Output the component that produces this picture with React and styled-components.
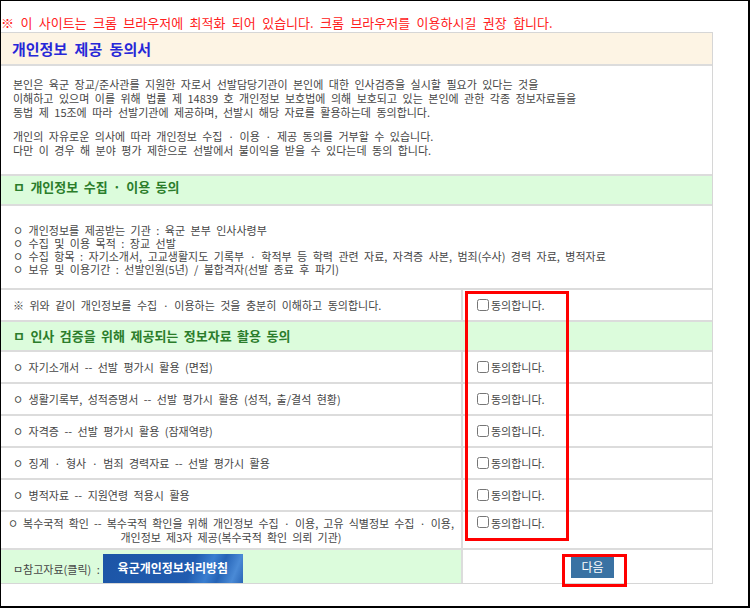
import React from "react";
import styled, { createGlobalStyle } from "styled-components";

const GlobalStyle = createGlobalStyle`
  body {
    margin: 0;
    background: #fff;
    font-family: "Noto Sans CJK KR", "Noto Sans", sans-serif;
  }
`;

const items = [
  "ㅇ 자기소개서 -- 선발 평가시 활용 (면접)",
  "ㅇ 생활기록부, 성적증명서 -- 선발 평가시 활용 (성적, 출/결석 현황)",
  "ㅇ 자격증 -- 선발 평가시 활용 (잠재역량)",
  "ㅇ 징계 · 형사 · 범죄 경력자료 -- 선발 평가시 활용",
  "ㅇ 병적자료 -- 지원연령 적용시 활용",
];

const Agree = ({ top }) => (
  <RightCell $top={top}>
    <Check type="checkbox" />
    <span>동의합니다.</span>
  </RightCell>
);

const App = () => {
  return (
    <Frame>
      <GlobalStyle />
      <Notice>
        ※ 이 사이트는 크롬 브라우저에 최적화 되어 있습니다. 크롬 브라우저를 이용하시길 권장 합니다.
      </Notice>
      <Sheet>
        <TitleBar>개인정보 제공 동의서</TitleBar>
        <Intro>
          <p>
            본인은 육군 장교/준사관를 지원한 자로서 선발담당기관이 본인에 대한 인사검증을 실시할 필요가 있다는 것을
            <br />
            이해하고 있으며 이를 위해 법률 제 14839 호 개인정보 보호법에 의해 보호되고 있는 본인에 관한 각종 정보자료들을
            <br />
            동법 제 15조에 따라 선발기관에 제공하며, 선발시 해당 자료를 활용하는데 동의합니다.
          </p>
          <p>
            개인의 자유로운 의사에 따라 개인정보 수집 · 이용 · 제공 동의를 거부할 수 있습니다.
            <br />
            다만 이 경우 해 분야 평가 제한으로 선발에서 불이익을 받을 수 있다는데 동의 합니다.
          </p>
        </Intro>
        <GroupHead $lift>ㅁ 개인정보 수집 · 이용 동의</GroupHead>
        <List>
          <li>ㅇ 개인정보를 제공받는 기관 : 육군 본부 인사사령부</li>
          <li>ㅇ 수집 및 이용 목적 : 장교 선발</li>
          <li>
            ㅇ 수집 항목 : 자기소개서, 고교생활지도 기록부 · 학적부 등 학력 관련 자료, 자격증 사본, 범죄(수사) 경력 자료, 병적자료
          </li>
          <li>ㅇ 보유 및 이용기간 : 선발인원(5년) / 불합격자(선발 종료 후 파기)</li>
        </List>
        <Row $h={30}>
          <LeftCell>※ 위와 같이 개인정보를 수집 · 이용하는 것을 충분히 이해하고 동의합니다.</LeftCell>
          <Agree />
        </Row>
        <GroupHead>ㅁ 인사 검증을 위해 제공되는 정보자료 활용 동의</GroupHead>
        {items.map((text) => (
          <Row key={text} $h={30}>
            <LeftCell>{text}</LeftCell>
            <Agree />
          </Row>
        ))}
        <Row $h={36}>
          <LeftCell $center>
            ㅇ 복수국적 확인 -- 복수국적 확인을 위해 개인정보 수집 · 이용, 고유 식별정보 수집 · 이용,
            <br />
            개인정보 제3자 제공(복수국적 확인 의뢰 기관)
          </LeftCell>
          <Agree top />
        </Row>
        <Row $h={33} $last>
          <RefCell>
            <RefLabel>ㅁ참고자료(클릭) :</RefLabel>
            <PolicyLink>육군개인정보처리방침</PolicyLink>
          </RefCell>
          <NextCell>
            <NextButton>다음</NextButton>
          </NextCell>
        </Row>
      </Sheet>
      <Mark $x={464} $y={290} $w={104} $h={250} />
      <Mark $x={561} $y={553} $w={65} $h={33} />
    </Frame>
  );
};

export default App;

const Frame = styled.div`
  position: relative;
  box-sizing: border-box;
  width: 750px;
  height: 608px;
  border-style: solid;
  border-color: #000;
  border-width: 1px 2px 2px 1px;
  background: #fff;
  overflow: hidden;
`;

const Notice = styled.div`
  box-sizing: border-box;
  height: 31px;
  padding-top: 14px;
  font-size: 13px;
  line-height: 16px;
  word-spacing: 3.5px;
  color: #ff2020;
  white-space: nowrap;
`;

const Sheet = styled.div`
  box-sizing: border-box;
  width: 712px;
  border-top: 1px solid #d6d6d6;
  border-right: 1px solid #d6d6d6;
  border-bottom: 1px solid #d6d6d6;
  color: #464646;
  font-size: 11px;
  word-spacing: 3px;
`;

const TitleBar = styled.div`
  display: flex;
  align-items: center;
  height: 31px;
  padding-left: 11px;
  background: #fdf4e4;
  border-bottom: 2px solid #dcdcdc;
  font-size: 15px;
  font-weight: bold;
  word-spacing: 4px;
  color: #2727d8;
`;

const Intro = styled.div`
  display: flex;
  flex-direction: column;
  gap: 10px;
  padding: 11px 12px 17px;
  line-height: 14px;
  border-bottom: 2px solid #dcdcdc;

  p {
    margin: 0;
  }
`;

const GroupHead = styled.div`
  display: flex;
  align-items: ${(p) => (p.$lift ? "flex-start" : "center")};
  box-sizing: border-box;
  height: 30px;
  padding: ${(p) => (p.$lift ? "3px 12px 0" : "0 12px")};
  line-height: 16px;
  background: #dcfcdc;
  border-bottom: 2px solid #dcdcdc;
  font-size: 13px;
  font-weight: bold;
  word-spacing: 2.5px;
  color: #2b7d2b;
`;

const List = styled.ul`
  margin: 0;
  padding: 18px 12px 12px;
  list-style: none;
  line-height: 13px;
  border-bottom: 2px solid #dcdcdc;
  white-space: nowrap;
`;

const Row = styled.div`
  display: flex;
  height: ${(p) => p.$h}px;
  border-bottom: ${(p) => (p.$last ? "none" : "2px solid #dcdcdc")};
`;

const LeftCell = styled.div`
  display: flex;
  align-items: center;
  justify-content: ${(p) => (p.$center ? "center" : "flex-start")};
  box-sizing: border-box;
  width: 462px;
  padding: ${(p) => (p.$center ? "0 2px" : "0 12px")};
  border-right: 2px solid #dcdcdc;
  line-height: 14px;
  text-align: ${(p) => (p.$center ? "center" : "left")};
  word-spacing: ${(p) => (p.$center ? "2.6px" : "3px")};
  white-space: nowrap;
`;

const RightCell = styled.div`
  display: flex;
  align-items: ${(p) => (p.$top ? "flex-start" : "center")};
  flex: 1;
  padding: ${(p) => (p.$top ? "4px 0 0 14px" : "0 0 0 14px")};
  line-height: 14px;
`;

const Check = styled.input`
  width: 12px;
  height: 12px;
  margin: 0 2px 0 0;
`;

const RefCell = styled.div`
  display: flex;
  align-items: flex-end;
  box-sizing: border-box;
  width: 462px;
  padding-left: 12px;
  background: #dcfcdc;
  border-right: 2px solid #dcdcdc;
`;

const RefLabel = styled.span`
  margin-bottom: 7px;
  line-height: 13px;
`;

const PolicyLink = styled.a`
  display: flex;
  align-items: center;
  justify-content: center;
  box-sizing: border-box;
  width: 140px;
  height: 29px;
  margin-left: 3px;
  padding-bottom: 2px;
  background: linear-gradient(
    112deg,
    #1c55a6 0%,
    #215cb0 62%,
    #3a7ed0 74%,
    #2563b6 82%,
    #4a8ad6 92%,
    #2a66b6 100%
  );
  color: #fff;
  font-size: 12px;
  font-weight: bold;
  word-spacing: 0;
  cursor: pointer;
`;

const NextCell = styled.div`
  display: flex;
  align-items: center;
  justify-content: center;
  flex: 1;
  padding-left: 10px;
`;

const NextButton = styled.button`
  width: 43px;
  height: 23px;
  padding: 0;
  border: none;
  background: #3a72a3;
  color: #fff;
  font-family: "Noto Sans CJK KR", sans-serif;
  font-size: 12px;
  cursor: pointer;
`;

const Mark = styled.div`
  position: absolute;
  left: ${(p) => p.$x}px;
  top: ${(p) => p.$y}px;
  width: ${(p) => p.$w}px;
  height: ${(p) => p.$h}px;
  box-sizing: border-box;
  border: 3px solid #ff0000;
  pointer-events: none;
`;
